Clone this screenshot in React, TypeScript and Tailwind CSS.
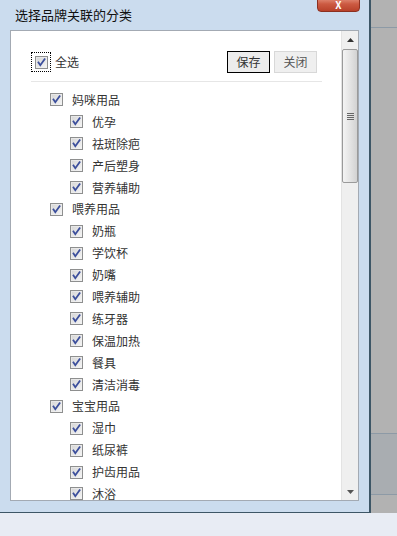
import React from 'react';

const tree = [
  { name: '妈咪用品', children: ['优孕', '祛斑除疤', '产后塑身', '营养辅助'] },
  { name: '喂养用品', children: ['奶瓶', '学饮杯', '奶嘴', '喂养辅助', '练牙器', '保温加热', '餐具', '清洁消毒'] },
  { name: '宝宝用品', children: ['湿巾', '纸尿裤', '护齿用品', '沐浴'] },
];

const Check = () => (
  <svg width="13" height="13" viewBox="0 0 13 13" className="shrink-0">
    <defs>
      <linearGradient id="cbg" x1="0" y1="0" x2="1" y2="1">
        <stop offset="0" stopColor="#d4d4d4" />
        <stop offset="1" stopColor="#f7f7f7" />
      </linearGradient>
    </defs>
    <rect x="0.5" y="0.5" width="12" height="12" fill="url(#cbg)" stroke="#8e8f8f" />
    <rect x="1.5" y="1.5" width="10" height="10" fill="none" stroke="#f0f0f0" strokeOpacity="0.6" />
    <path d="M3.5 6.5 L5.3 9.2 L9.6 3.2" fill="none" stroke="#3c4f9c" strokeWidth="1.8" strokeLinecap="square" />
  </svg>
);

const Row = ({ label, indent }: { label: string; indent: string }) => (
  <div className={`flex h-[21.9px] items-center ${indent}`}>
    <Check />
    <span className="ml-[9px] text-[12px] leading-none text-[#333]">{label}</span>
  </div>
);

export default function App() {
  return (
    <div
      className="flex h-[536px] w-[397px] flex-col overflow-hidden bg-[#e8ecf4]"
      style={{ fontFamily: '"Noto Sans CJK SC", "Liberation Sans", sans-serif' }}
    >
      <div className="flex h-[513px]">
        <div className="relative flex w-[371px] flex-col border-b border-r-2 border-[#3d5666] bg-[#cbdcee]">
          <div className="absolute right-[9px] top-[-4px] flex h-[16px] w-[43px] items-end justify-center rounded-b-[4px] border border-[#8c3020] bg-gradient-to-b from-[#e79a86] via-[#cc5a42] to-[#b8412a] pb-[1px]">
            <span className="text-[10px] font-bold leading-none text-white">X</span>
          </div>
          <div className="flex h-[29px] items-center pl-[15px] text-[13px] text-[#111]">选择品牌关联的分类</div>
          <div className="mx-[10px] mt-[1px] flex h-[471px] border border-[#a3aab3] bg-white">
            <div className="flex-1 overflow-hidden pl-[20px] pt-[20px]">
              <div className="flex h-[22px] w-[291px] items-center pr-[5px]">
                <div className="flex h-[20px] w-[20px] items-center justify-center border border-dotted border-black">
                  <Check />
                </div>
                <span className="ml-[4px] text-[12px] text-[#333]">全选</span>
                <div className="ml-auto flex gap-[4px]">
                  <button className="h-[22px] w-[43px] border border-black bg-[#ececec] text-[12px] text-[#333]">保存</button>
                  <button className="h-[22px] w-[43px] border border-[#d8d8d8] bg-[#efefef] text-[12px] text-[#555]">关闭</button>
                </div>
              </div>
              <div className="mt-[8px] w-[291px] border-b border-[#e6e6e6]" />
              <div className="pt-[7px]">
                {tree.map((g) => (
                  <div key={g.name}>
                    <Row label={g.name} indent="pl-[19px]" />
                    {g.children.map((c) => (
                      <Row key={c} label={c} indent="pl-[39px]" />
                    ))}
                  </div>
                ))}
              </div>
            </div>
            <div className="flex w-[17px] flex-col border-l border-[#e3e3e3] bg-[#efefef]">
              <div className="flex h-[18px] items-center justify-center">
                <svg width="7" height="4" viewBox="0 0 7 4">
                  <path d="M0 4 L3.5 0 L7 4 Z" fill="#333" />
                </svg>
              </div>
              <div className="flex h-[134px] items-center justify-center rounded-[2px] border border-[#9a9a9a] bg-gradient-to-r from-[#f4f4f4] via-[#e4e4e4] to-[#d2d2d2]">
                <div className="flex flex-col gap-[1px]">
                  <div className="h-px w-[7px] bg-[#666]" />
                  <div className="h-px w-[7px] bg-[#666]" />
                  <div className="h-px w-[7px] bg-[#666]" />
                  <div className="h-px w-[7px] bg-[#666]" />
                </div>
              </div>
              <div className="flex-1" />
              <div className="flex h-[17px] items-center justify-center">
                <svg width="7" height="4" viewBox="0 0 7 4">
                  <path d="M0 0 L7 0 L3.5 4 Z" fill="#555" />
                </svg>
              </div>
            </div>
          </div>
        </div>
        <div className="flex flex-1 flex-col bg-[#b2b2b2]">
          <div className="h-[27px]" />
          <div className="h-px bg-[#8d9aa6]" />
          <div className="h-[405px]" />
          <div className="h-px bg-[#8d9aa6]" />
          <div className="h-[60px] bg-[#a9adb1]" />
          <div className="h-px bg-[#8d9aa6]" />
          <div className="flex-1" />
        </div>
      </div>
      <div className="flex-1 bg-[#e8ecf4]" />
    </div>
  );
}
